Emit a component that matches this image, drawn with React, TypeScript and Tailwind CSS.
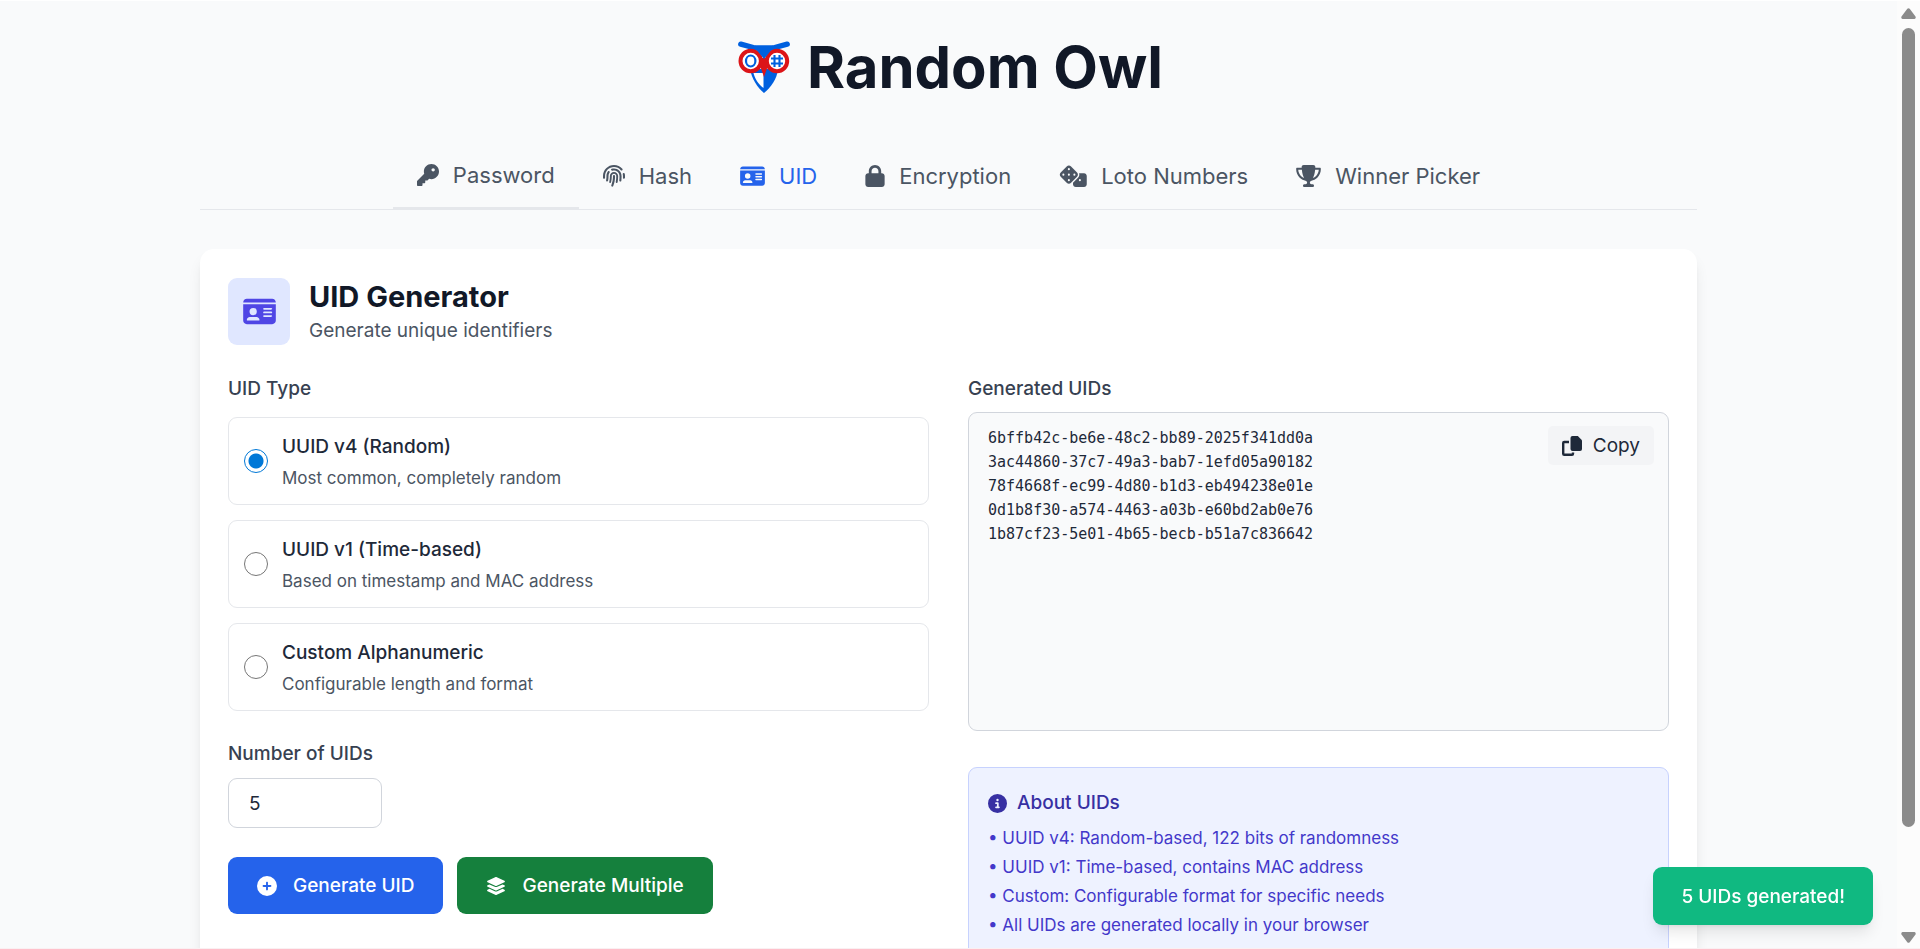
import { useState } from "react";
import type { IconType } from "react-icons";
import {
  FaCircleInfo,
  FaCirclePlus,
  FaDice,
  FaFingerprint,
  FaIdCard,
  FaKey,
  FaLayerGroup,
  FaLock,
  FaTrophy,
} from "react-icons/fa6";

interface Tab {
  id: string;
  label: string;
  icon: IconType;
  iconClass: string;
}

const tabs: Tab[] = [
  { id: "password", label: "Password", icon: FaKey, iconClass: "h-[22px] w-[22px]" },
  { id: "hash", label: "Hash", icon: FaFingerprint, iconClass: "h-[22px] w-[22px]" },
  { id: "uid", label: "UID", icon: FaIdCard, iconClass: "h-[22px] w-[25px]" },
  { id: "encryption", label: "Encryption", icon: FaLock, iconClass: "h-[22px] w-5" },
  { id: "loto", label: "Loto Numbers", icon: FaDice, iconClass: "h-[22px] w-7" },
  { id: "winner", label: "Winner Picker", icon: FaTrophy, iconClass: "h-[22px] w-[25px]" },
];

const uidTypes = [
  { id: "v4", title: "UUID v4 (Random)", text: "Most common, completely random" },
  { id: "v1", title: "UUID v1 (Time-based)", text: "Based on timestamp and MAC address" },
  { id: "custom", title: "Custom Alphanumeric", text: "Configurable length and format" },
];

const uids = [
  "6bffb42c-be6e-48c2-bb89-2025f341dd0a",
  "3ac44860-37c7-49a3-bab7-1efd05a90182",
  "78f4668f-ec99-4d80-b1d3-eb494238e01e",
  "0d1b8f30-a574-4463-a03b-e60bd2ab0e76",
  "1b87cf23-5e01-4b65-becb-b51a7c836642",
];

const facts = [
  "UUID v4: Random-based, 122 bits of randomness",
  "UUID v1: Time-based, contains MAC address",
  "Custom: Configurable format for specific needs",
  "All UIDs are generated locally in your browser",
];

function OwlLogo() {
  return (
    <svg viewBox="0 0 52 52" className="h-[52px] w-[52px]" aria-hidden="true">
      <path d="M12 28C14 38 19 46 26 52C33 46 39 38 40 28Z" fill="#0060df" />
      <path d="M15.500 32C17 38 20 43 25.500 47V32Z" fill="#fff" />
      <path d="M2.800 3.200L17 7H35L49.200 3.200" fill="none" stroke="#0060df" strokeWidth="5.400" strokeLinecap="round" strokeLinejoin="round" />
      <circle cx="12.700" cy="20" r="10.200" fill="#fff" stroke="#dc1418" strokeWidth="4" />
      <circle cx="39" cy="20" r="10.200" fill="#fff" stroke="#dc1418" strokeWidth="4" />
      <path d="M22.500 17H29.500V26L26 36L22.500 26Z" fill="#dc1418" />
      <path d="M12 5H40L33 9.500L26 18L19 9.500Z" fill="#0060df" />
      <ellipse cx="12.700" cy="20" rx="4.700" ry="5.500" fill="none" stroke="#0060df" strokeWidth="2.200" />
      <path d="M36.500 14V26M41.500 14V26M33 17.500H45M33 22.500H45" fill="none" stroke="#0060df" strokeWidth="2.100" />
    </svg>
  );
}

function CopyIcon() {
  return (
    <svg viewBox="0 0 20 20" className="h-5 w-5" aria-hidden="true">
      <path d="M10.500 0H15.800L20 4.200V13Q20 15 18 15H10.500Q8.500 15 8.500 13V2Q8.500 0 10.500 0Z" fill="currentColor" />
      <path d="M7 6H2.200Q1.200 6 1.200 7V17.800Q1.200 18.800 2.200 18.800H10Q11 18.800 11 17.800V16.500" fill="none" stroke="currentColor" strokeWidth="2.400" />
    </svg>
  );
}

function Scrollbar() {
  return (
    <div className="flex w-[23px] shrink-0 flex-col items-center bg-[#fcfcfc] pt-[7px] pb-[5px]">
      <svg viewBox="0 0 15 11" className="h-[11px] w-[15px] fill-[#8b8b8b]">
        <path d="M6.300 .8Q7.500 -.4 8.700 .8L14.500 8.500Q15.200 10.700 13.500 11H1.500Q-.2 10.700 .5 8.500Z" />
      </svg>
      <div className="mt-[9px] h-[85.5%] w-[13px] rounded-full bg-[#8b8b8b]" />
      <svg viewBox="0 0 15 11" className="mt-auto h-[11px] w-[15px] rotate-180 fill-[#8b8b8b]">
        <path d="M6.300 .8Q7.500 -.4 8.700 .8L14.500 8.500Q15.200 10.700 13.500 11H1.500Q-.2 10.700 .5 8.500Z" />
      </svg>
    </div>
  );
}

export default function App() {
  const [activeTab, setActiveTab] = useState("uid");
  const [uidType, setUidType] = useState("v4");
  const [count, setCount] = useState("5");

  return (
    <div className="flex h-screen overflow-hidden border-t border-b border-t-white border-b-[#faf0f2] bg-[#f9fafb] font-['Inter',sans-serif] text-[19px] leading-7 text-gray-800">
      <div className="min-w-0 flex-1 overflow-hidden">
        <div className="mx-auto max-w-[1497px] pt-9">
          <header className="flex items-center justify-center gap-[17px] pl-1">
            <OwlLogo />
            <h1 className="text-[58px] leading-[60px] font-bold text-[#111827]">Random Owl</h1>
          </header>

          <nav className="mt-12 flex justify-center border-b border-gray-200">
            {tabs.map(({ id, label, icon: Icon, iconClass }) => (
              <button
                key={id}
                onClick={() => setActiveTab(id)}
                className={`flex items-center gap-[14px] px-6 text-[22px] ${
                  activeTab === id ? "text-[#2563eb]" : "text-[#4b5563]"
                } ${id === "password" ? "border-b-2 border-gray-200 pt-[15px] pb-[18px]" : "pt-[17px] pb-[19px]"}`}
              >
                <Icon className={iconClass} />
                {label}
              </button>
            ))}
          </nav>

          <main className="mt-[39px] rounded-[14px] bg-white px-7 pt-[29px] pb-7 shadow-lg">
            <div className="flex items-center gap-[19px]">
              <div className="flex h-[67px] w-[62px] items-center justify-center rounded-[9px] bg-[#e0e7ff] text-[#4f46e5]">
                <FaIdCard className="h-[29px] w-[33px]" />
              </div>
              <div>
                <h2 className="text-[29px] leading-9 font-bold text-[#111827]">UID Generator</h2>
                <p className="mt-0.5 text-[#4b5563]">Generate unique identifiers</p>
              </div>
            </div>

            <div className="mt-[30px] grid grid-cols-2 gap-[39px]">
              <div>
                <fieldset>
                  <legend className="font-medium text-[#374151]">UID Type</legend>
                  <div className="mt-[14px] flex flex-col gap-[15px]">
                    {uidTypes.map((type) => (
                      <label key={type.id} className="flex h-[88px] items-center gap-[14px] rounded-[9px] border border-gray-200 px-[15px]">
                        <input
                          type="radio"
                          name="uid-type"
                          value={type.id}
                          checked={uidType === type.id}
                          onChange={() => setUidType(type.id)}
                          className="h-6 w-6 appearance-none rounded-full border border-[#767676] bg-white checked:border-[#0078d7] checked:bg-[radial-gradient(circle,#0078d7_7px,#fff_8px)]"
                        />
                        <span className="pt-[3px]">
                          <span className="block font-medium">{type.title}</span>
                          <span className="mt-[3px] block text-[17px] leading-7 text-[#4b5563]">{type.text}</span>
                        </span>
                      </label>
                    ))}
                  </div>
                </fieldset>

                <label htmlFor="uid-count" className="mt-[29px] block font-medium text-[#374151]">
                  Number of UIDs
                </label>
                <input
                  id="uid-count"
                  type="text"
                  inputMode="numeric"
                  value={count}
                  onChange={(e) => setCount(e.target.value)}
                  className="mt-[10px] h-[50px] w-[154px] rounded-[9px] border border-gray-300 bg-white px-5"
                />

                <div className="mt-[29px] flex gap-[14px]">
                  <button className="flex h-[57px] items-center gap-4 rounded-[9px] bg-[#2563eb] px-[29px] font-medium text-white">
                    <FaCirclePlus className="h-5 w-5" />
                    Generate UID
                  </button>
                  <button className="flex h-[57px] items-center gap-4 rounded-[9px] bg-[#15803d] px-[29px] font-medium text-white">
                    <FaLayerGroup className="h-5 w-5" />
                    Generate Multiple
                  </button>
                </div>
              </div>

              <div>
                <h3 className="font-medium text-[#374151]">Generated UIDs</h3>
                <div className="mt-[9px] flex h-[319px] items-start justify-between rounded-[9px] border border-gray-300 bg-[#f9fafb] py-[13px] pr-[14px] pl-[19px]">
                  <pre className="font-['DejaVu_Sans_Mono',monospace] text-[15px] leading-6">{uids.join("\n")}</pre>
                  <button className="flex h-[39px] items-center gap-[11px] rounded-[5px] bg-gray-100 px-[14px]">
                    <CopyIcon />
                    Copy
                  </button>
                </div>

                <section className="mt-9 rounded-[9px] border border-[#c7d2fe] bg-[#eef2ff] px-[19px] pt-[21px] pb-[19px]">
                  <h3 className="flex items-center gap-[10px] font-medium text-[#3730a3]">
                    <FaCircleInfo className="h-[19px] w-[19px]" />
                    About UIDs
                  </h3>
                  <ul className="mt-[7px] text-[17px] leading-[29px] text-[#4338ca]">
                    {facts.map((fact) => (
                      <li key={fact}>• {fact}</li>
                    ))}
                  </ul>
                </section>
              </div>
            </div>
          </main>
        </div>
      </div>

      <Scrollbar />

      <div role="status" className="fixed right-[47px] bottom-6 rounded-[9px] bg-[#10b981] px-7 pt-4 pb-[14px] font-medium text-white shadow-lg">
        5 UIDs generated!
      </div>
    </div>
  );
}
